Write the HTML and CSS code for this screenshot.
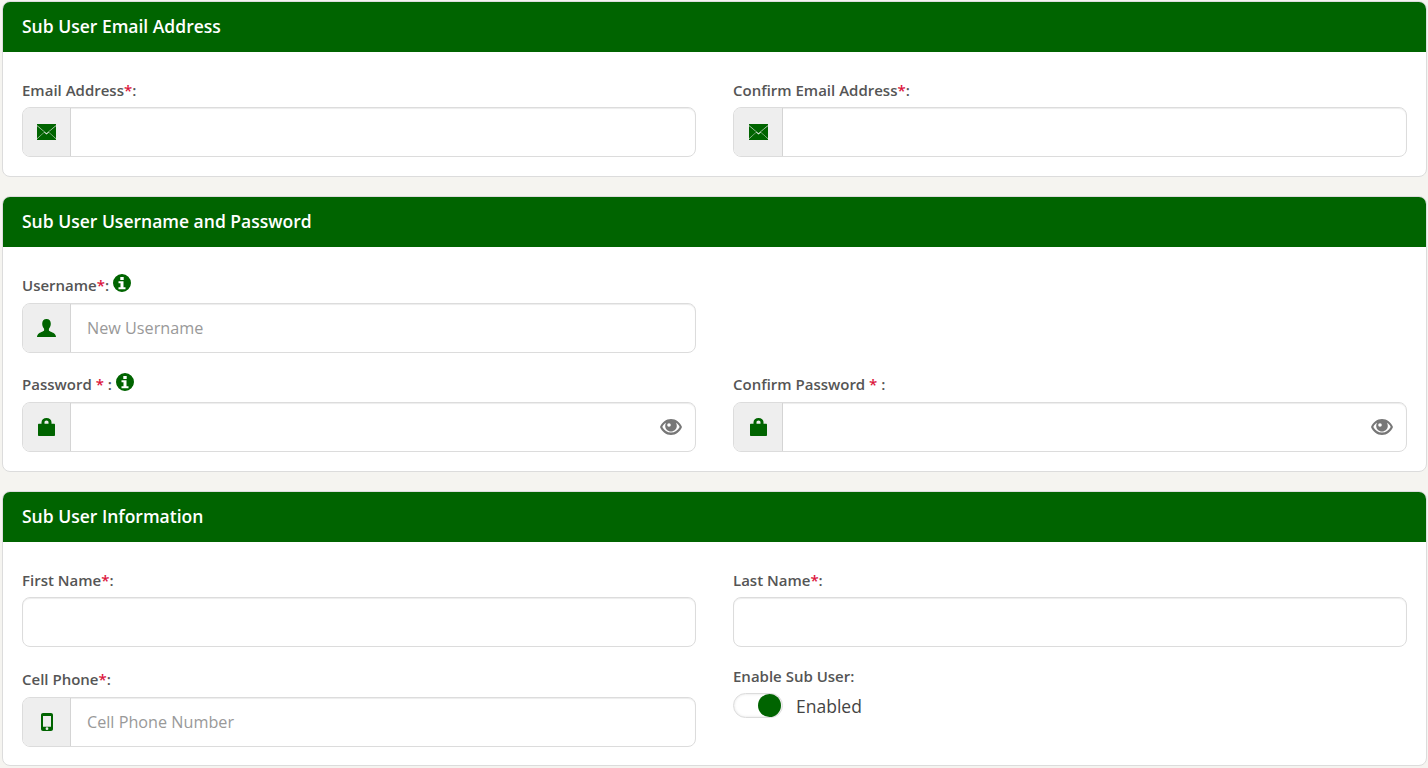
FILE: index.html
```html
<!DOCTYPE html>
<html lang="en">
<head>
<meta charset="utf-8">
<title>Sub User</title>
<link rel="stylesheet" href="styles.css">
</head>
<body>
<svg class="defs" width="0" height="0" aria-hidden="true">
  <symbol id="i-mail" viewBox="0 0 19 16">
    <path d="M0 0h19v1.200L9.500 9.300 0 1.200z"/>
    <path d="M0 1.900v12.500l7.400-6.500z"/>
    <path d="M19 1.900v12.500l-7.400-6.500z"/>
    <path d="M0 16h19v-.9l-7.200-6.600-2.300 1.900-2.300-1.900L0 15.100z"/>
  </symbol>
  <symbol id="i-user" viewBox="0 0 19 18">
    <path d="M9.500 0c2.800 0 4.300 2 4.300 4.800 0 2-.8 3.800-1.900 4.900v1.500c0 1.100 3.200 1.700 5 3 1.300 1 2.100 2.300 2.100 3.800H0c0-1.500.8-2.800 2.100-3.800 1.800-1.300 5-1.900 5-3V9.700c-1.100-1.100-1.900-2.900-1.900-4.900C5.200 2 6.700 0 9.500 0z"/>
  </symbol>
  <symbol id="i-lock" viewBox="0 0 17 18">
    <path fill-rule="evenodd" d="M3.500 5.800V4.300C3.500 1.700 5.500 0 8.500 0s5 1.700 5 4.300v1.500H16c.6 0 1 .4 1 1V17c0 .6-.4 1-1 1H1c-.6 0-1-.4-1-1V6.800c0-.6.4-1 1-1zm3 0h4V4.300c0-1.200-.8-1.900-2-1.900s-2 .7-2 1.900z"/>
  </symbol>
  <symbol id="i-phone" viewBox="0 0 12 18">
    <path fill-rule="evenodd" d="M2 0h8c1.200 0 2 .8 2 2v14c0 1.200-.8 2-2 2H2c-1.200 0-2-.8-2-2V2C0 .8.800 0 2 0zm0 3v10.700h8V3zm4 11.300a1.400 1.400 0 1 0 0 2.800 1.400 1.400 0 0 0 0-2.800z"/>
  </symbol>
  <symbol id="i-eye" viewBox="0 0 22 16">
    <path fill-rule="evenodd" d="M11 0c5 0 9 3.300 11 8-2 4.700-6 8-11 8S2 12.700 0 8c2-4.700 6-8 11-8zM6 3.800C4.500 4.700 3.200 6.100 2.300 8c1.800 3.500 5 5.600 8.700 5.600s6.900-2.100 8.700-5.600c-.9-1.900-2.200-3.300-3.700-4.200.5.900.8 2 .8 3.100 0 3-2.700 5.500-5.800 5.500S5.200 9.900 5.200 6.900c0-1.100.3-2.200.8-3.100zM9 4.200a1.800 1.800 0 1 0 0 3.600 1.800 1.800 0 0 0 0-3.600z"/>
  </symbol>
  <symbol id="i-info" viewBox="0 0 18 18">
    <path fill-rule="evenodd" d="M9 0a9 9 0 1 1 0 18A9 9 0 0 1 9 0zM7.300 3v3h3.400V3zM5.500 7.300v2h2v3.900h-2v2h7v-2h-2V7.300z"/>
  </symbol>
</svg>

<main class="page">
  <section class="card">
    <h2 class="card-title">Sub User Email Address</h2>
    <div class="card-body">
      <div class="field">
        <label class="label">Email Address<span class="req">*</span>:</label>
        <div class="group">
          <span class="addon"><svg class="ico ico-mail"><use href="#i-mail"/></svg></span>
          <input class="input" type="text">
        </div>
      </div>
      <div class="field">
        <label class="label">Confirm Email Address<span class="req">*</span>:</label>
        <div class="group">
          <span class="addon"><svg class="ico ico-mail"><use href="#i-mail"/></svg></span>
          <input class="input" type="text">
        </div>
      </div>
    </div>
  </section>

  <section class="card">
    <h2 class="card-title">Sub User Username and Password</h2>
    <div class="card-body">
      <div class="field">
        <label class="label label-tall">Username<span class="req">*</span>: <svg class="info"><use href="#i-info"/></svg></label>
        <div class="group">
          <span class="addon"><svg class="ico ico-user"><use href="#i-user"/></svg></span>
          <input class="input" type="text" placeholder="New Username">
        </div>
      </div>
      <div class="field"></div>
      <div class="field">
        <label class="label label-up">Password <span class="req">*</span> : <svg class="info"><use href="#i-info"/></svg></label>
        <div class="group">
          <span class="addon"><svg class="ico ico-lock"><use href="#i-lock"/></svg></span>
          <input class="input" type="password">
          <svg class="eye"><use href="#i-eye"/></svg>
        </div>
      </div>
      <div class="field">
        <label class="label label-up">Confirm Password <span class="req">*</span> :</label>
        <div class="group">
          <span class="addon"><svg class="ico ico-lock"><use href="#i-lock"/></svg></span>
          <input class="input" type="password">
          <svg class="eye"><use href="#i-eye"/></svg>
        </div>
      </div>
    </div>
  </section>

  <section class="card card-last">
    <h2 class="card-title">Sub User Information</h2>
    <div class="card-body">
      <div class="field">
        <label class="label">First Name<span class="req">*</span>:</label>
        <div class="group"><input class="input" type="text"></div>
      </div>
      <div class="field">
        <label class="label">Last Name<span class="req">*</span>:</label>
        <div class="group"><input class="input" type="text"></div>
      </div>
      <div class="field field-spaced">
        <label class="label label-up">Cell Phone<span class="req">*</span>:</label>
        <div class="group">
          <span class="addon"><svg class="ico ico-phone"><use href="#i-phone"/></svg></span>
          <input class="input" type="text" placeholder="Cell Phone Number">
        </div>
      </div>
      <div class="field field-toggle">
        <label class="label">Enable Sub User:</label>
        <div class="toggle-row">
          <span class="toggle"><span class="knob"></span></span>
          <span class="toggle-text">Enabled</span>
        </div>
      </div>
    </div>
  </section>
</main>
</body>
</html>
```
FILE: styles.css
```css
* { box-sizing: border-box; }
html, body { margin: 0; padding: 0; }
body {
  background: #f5f4f0;
  font-family: "Open Sans", "Liberation Sans", sans-serif;
  color: #555;
  height: 768px;
  overflow: hidden;
}
.defs { position: absolute; }
.page {
  display: flex;
  flex-direction: column;
  gap: 19px;
  padding: 1px 1px 0 2px;
}
.card {
  background: #fff;
  border: 1px solid #dcdcdc;
  border-radius: 8px;
  overflow: hidden;
}
.card-title {
  margin: 0;
  height: 50px;
  padding: 0 19px;
  background: #006400;
  color: #fff;
  font-size: 17.5px;
  font-weight: 600;
  line-height: 49px;
}
.card-body {
  display: grid;
  grid-template-columns: 674px 674px;
  column-gap: 37px;
  padding: 26px 19px 19px;
}
.card-last .card-body { padding-bottom: 18px; }
.field { min-width: 0; }
.field:nth-child(n+3) { margin-top: 20px; }
.field-spaced:nth-child(n+3) { margin-top: 21px; }
.label {
  display: block;
  height: 29px;
  font-size: 15px;
  font-weight: 600;
  line-height: 25px;
  color: #555;
}
.label-tall { height: 30px; line-height: 25px; }
.label-up { line-height: 23px; }
.req { color: #dc143c; }
.info {
  width: 18px;
  height: 18px;
  fill: #006400;
  vertical-align: -1px;
}
.group {
  display: flex;
  position: relative;
  height: 50px;
  border: 1px solid #dcdcdc;
  border-radius: 8px;
  background: #fff;
  box-shadow: inset 0 1px 1px rgba(0, 0, 0, .075);
  overflow: hidden;
}
.addon {
  flex: 0 0 48px;
  display: flex;
  align-items: center;
  justify-content: center;
  background: #eee;
  border-right: 1px solid #d4d4d4;
}
.field:nth-child(even) .addon { flex-basis: 49px; }
.ico { fill: #006400; display: block; }
.ico-mail { width: 19px; height: 16px; }
.ico-user { width: 19px; height: 18px; }
.ico-lock { width: 17px; height: 18px; }
.ico-phone { width: 12px; height: 18px; }
.input {
  flex: 1;
  min-width: 0;
  border: 0;
  outline: 0;
  padding: 0 15px 0 16px;
  background: transparent;
  font-family: inherit;
  font-size: 16.2px;
  color: #555;
}
.input::placeholder { color: #999; opacity: 1; }
.eye {
  position: absolute;
  right: 13px;
  top: 16px;
  width: 22px;
  height: 16px;
  fill: #777;
}
.field-toggle:nth-child(n+3) { margin-top: 17px; }
.toggle-row { display: flex; align-items: center; gap: 13px; }
.toggle {
  display: flex;
  justify-content: flex-end;
  align-items: center;
  width: 50px;
  height: 25px;
  padding: 0 1px;
  border: 1px solid #dcdcdc;
  border-radius: 13px;
  background: #fff;
  box-shadow: inset 0 0 3px rgba(0, 0, 0, .12);
}
.knob {
  width: 23px;
  height: 23px;
  border-radius: 50%;
  background: #006400;
}
.toggle-text { font-size: 17.5px; color: #444; }
```
